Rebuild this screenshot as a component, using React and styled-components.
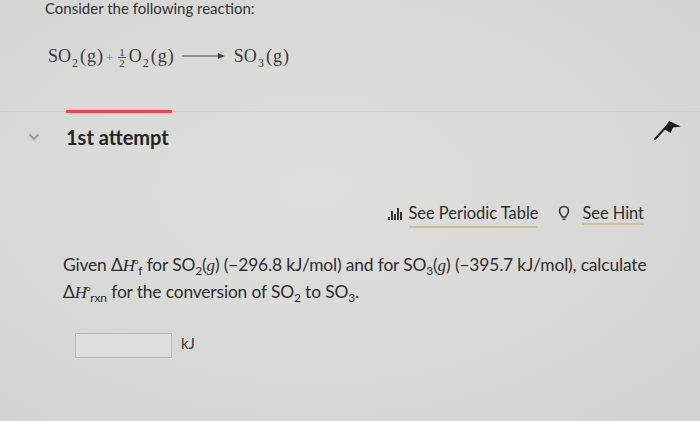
import React from 'react';
import styled, { createGlobalStyle } from 'styled-components';

const Global = createGlobalStyle`
  html, body {
    margin: 0;
    padding: 0;
    background: #d9d9d7;
  }
  body {
    font-family: Lato, "Open Sans", sans-serif;
    color: #2b2b2b;
  }
`;

const Page = styled.div`
  width: 700px;
  height: 421px;
  overflow: hidden;
  padding-top: 1px;
  box-sizing: border-box;
  background: radial-gradient(ellipse at 45% 45%, #dededc 0%, #d8d8d6 60%, #d2d2d0 100%);
`;

const Intro = styled.div`
  padding-left: 45px;
  margin-top: -2px;
  height: 18px;
  font-size: 15px;
  line-height: 18px;
  color: #333;
`;

const Equation = styled.div`
  padding-left: 48px;
  margin-top: 24px;
  height: 30px;
  line-height: 30px;
  white-space: nowrap;
  font-family: "Liberation Serif", "DejaVu Serif", serif;
  font-size: 18px;
  color: #3a3a3a;
`;

const Sub = styled.sub`
  font-size: 12px;
  line-height: 0;
  vertical-align: -5px;
  margin: 0 2px 0 1px;
`;

const G = styled.span`
  padding: 0 1px;
`;

const Plus = styled.span`
  margin: 0 5px 0 3px;
  font-size: 13px;
  color: #777;
`;

const Frac = styled.span`
  display: inline-flex;
  flex-direction: column;
  align-items: center;
  vertical-align: 6px;
  font-size: 11px;
  line-height: 10px;
  margin-right: 3px;
  & > span:first-child {
    border-bottom: 1px solid #555;
    padding: 0 1px;
  }
`;

const Arrow = styled.svg`
  margin: 0 8px 0 8px;
  vertical-align: 2px;
`;

const Divider = styled.div`
  margin-top: 40px;
  height: 1px;
  background: #cececc;
  position: relative;
`;

const RedBar = styled.div`
  position: absolute;
  left: 66px;
  top: -1px;
  width: 106px;
  height: 3px;
  border-radius: 1px;
  background: #d2524c;
  box-shadow: 0 0 2px rgba(230, 90, 80, 0.5);
`;

const AttemptRow = styled.div`
  display: flex;
  align-items: center;
  padding-left: 28px;
  margin-top: 12px;
  height: 26px;
  position: relative;
`;

const Chevron = styled.svg`
  margin-right: 26px;
`;

const AttemptTitle = styled.div`
  font-weight: 700;
  font-size: 20px;
  color: #252525;
  flex: 1;
`;

const Flag = styled.svg`
  position: absolute;
  right: 17px;
  top: -5px;
`;

const Tools = styled.div`
  display: flex;
  justify-content: flex-end;
  align-items: center;
  gap: 20px;
  padding-right: 56px;
  margin-top: 50px;
  height: 26px;
`;

const ToolLink = styled.a`
  display: flex;
  align-items: center;
  gap: 6px;
  font-size: 16.4px;
  color: #2e2e2e;
  text-decoration: none;
  cursor: pointer;
`;

const ToolText = styled.span`
  border-bottom: 2px solid #cbbf98;
  padding-bottom: ${p => p.$pb || 2}px;
  margin-top: ${p => p.$pb || 2}px;
  margin-left: ${p => p.$ml || 0}px;
`;

const Question = styled.p`
  margin: 26px 0 0 63px;
  font-size: 17.4px;
  line-height: 26px;
  color: #2e2e2e;
  letter-spacing: -0.15px;
  white-space: nowrap;
`;

const It = styled.i`
  font-family: "Liberation Serif", serif;
  font-size: 17px;
  letter-spacing: 0;
`;

const Deg = styled.sup`
  font-size: 8px;
  line-height: 0;
  vertical-align: 7px;
  margin-left: -1px;
`;

const Small = styled.sub`
  font-size: 12px;
  line-height: 0;
  vertical-align: -4px;
`;

const AnswerRow = styled.div`
  display: flex;
  align-items: center;
  gap: 9px;
  margin: 27px 0 0 75px;
`;

const Input = styled.div`
  width: 95px;
  height: 23px;
  border: 1px solid #b7b7b5;
  background: #dfdfdd;
`;

const Unit = styled.span`
  font-size: 15px;
  color: #3a3a3a;
  margin-top: -6px;
`;

export default function App() {
  return (
    <Page>
      <Global />
      <Intro>Consider the following reaction:</Intro>
      <Equation>
        SO<Sub>2</Sub>(<G>g</G>)
        <Plus>+</Plus>
        <Frac><span>1</span><span>2</span></Frac>
        O<Sub>2</Sub>(<G>g</G>)
        <Arrow width="44" height="8" viewBox="0 0 44 8">
          <line x1="0" y1="4" x2="40" y2="4" stroke="#444" strokeWidth="1.2" />
          <path d="M36 1 L43 4 L36 7 Z" fill="#444" />
        </Arrow>
        SO<Sub>3</Sub>(<G>g</G>)
      </Equation>
      <Divider>
        <RedBar />
      </Divider>
      <AttemptRow>
        <Chevron width="12" height="8" viewBox="0 0 12 8">
          <path d="M1.5 1.5 L6 6 L10.5 1.5" fill="none" stroke="#9a9a9a" strokeWidth="2" />
        </Chevron>
        <AttemptTitle>1st attempt</AttemptTitle>
        <Flag width="30" height="22" viewBox="0 0 30 22">
          <path d="M2 20 L14 7" stroke="#1d1d1d" strokeWidth="2" strokeLinecap="round" />
          <path d="M11 10 L16 2 L28 7.5 L20 8.5 L17.5 14 Z" fill="#1d1d1d" />
        </Flag>
      </AttemptRow>
      <Tools>
        <ToolLink>
          <svg width="15" height="14" viewBox="0 0 15 14">
            <rect x="0" y="11" width="2" height="3" fill="#333" />
            <rect x="3" y="5" width="2" height="9" fill="#333" />
            <rect x="6" y="8" width="2" height="6" fill="#333" />
            <rect x="9" y="2" width="2" height="12" fill="#333" />
            <rect x="12" y="6" width="2" height="8" fill="#333" />
          </svg>
          <ToolText $pb={4}>See Periodic Table</ToolText>
        </ToolLink>
        <ToolLink>
          <svg width="12" height="16" viewBox="0 0 12 16">
            <path d="M6 1.5 C3 1.5 1.5 3.6 1.5 6 C1.5 8.5 3.6 9.8 4.3 12 L7.7 12 C8.4 9.8 10.5 8.5 10.5 6 C10.5 3.6 9 1.5 6 1.5 Z" fill="none" stroke="#333" strokeWidth="1.6" />
            <line x1="4.6" y1="14.3" x2="7.4" y2="14.3" stroke="#333" strokeWidth="1.5" />
          </svg>
          <ToolText $ml={6} $pb={1}>See Hint</ToolText>
        </ToolLink>
      </Tools>
      <Question>
        Given Δ<It>H</It><Deg>o</Deg><Small>f</Small> for SO<Small>2</Small>(<It>g</It>) (−296.8 kJ/mol) and for SO<Small>3</Small>(<It>g</It>) (−395.7 kJ/mol), calculate
        <br />
        Δ<It>H</It><Deg>o</Deg><Small>rxn</Small> for the conversion of SO<Small>2</Small> to SO<Small>3</Small>.
      </Question>
      <AnswerRow>
        <Input />
        <Unit>kJ</Unit>
      </AnswerRow>
    </Page>
  );
}
